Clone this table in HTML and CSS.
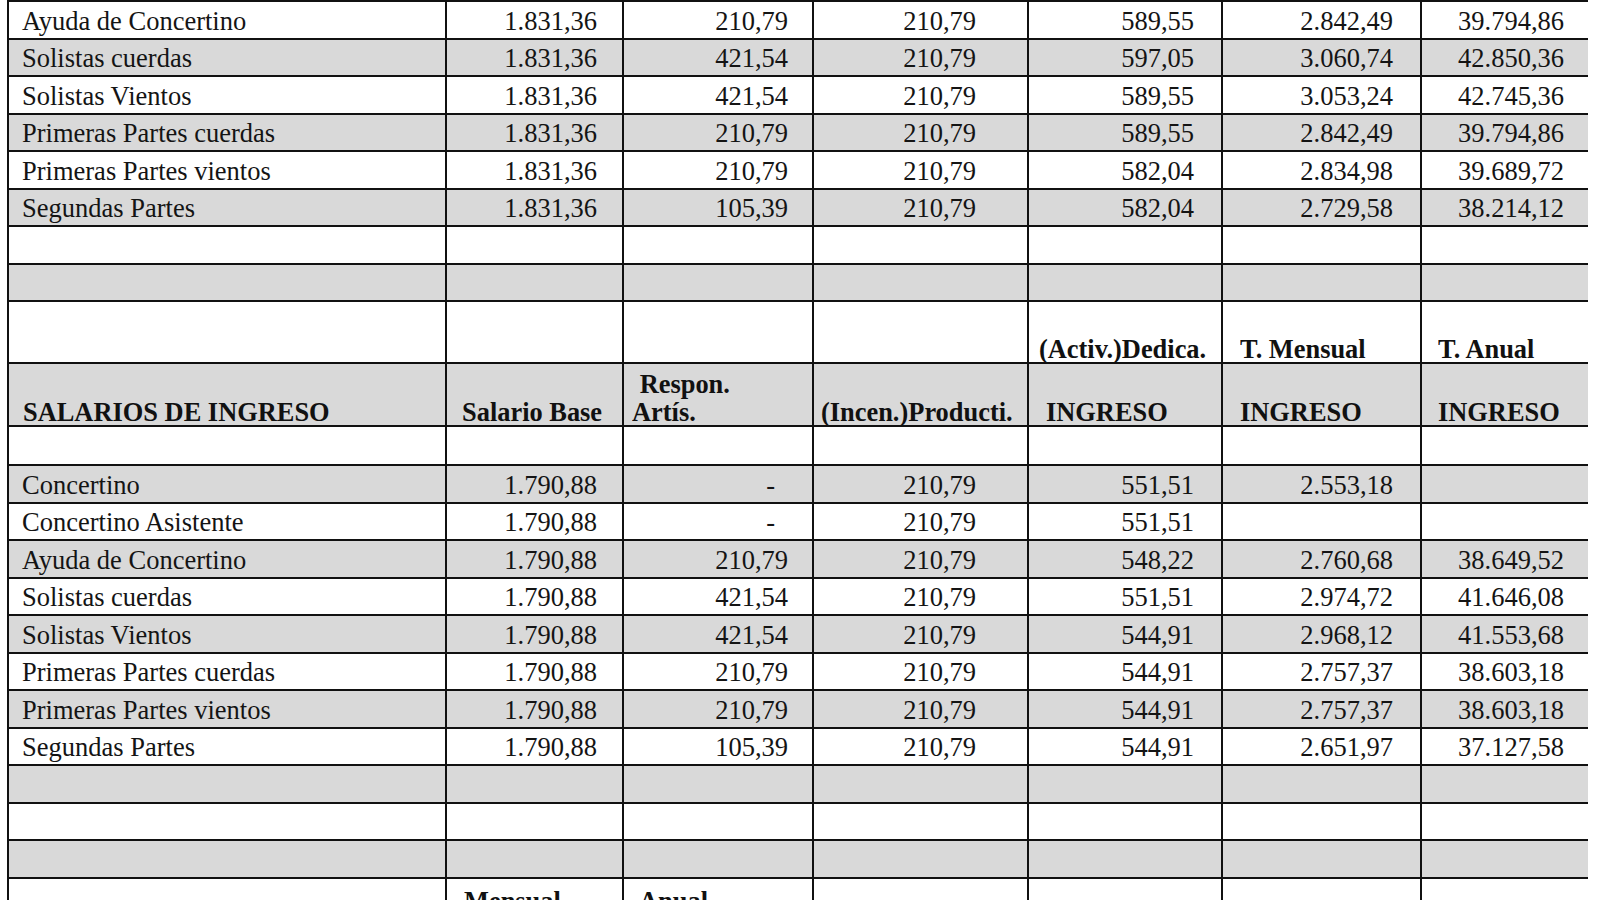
FILE: index.html
```html
<!DOCTYPE html>
<html lang="es">
<head>
<meta charset="utf-8">
<title>Salarios</title>
<link rel="stylesheet" href="styles.css">
</head>
<body>
<div class="sheet">
  <div class="row"><div class="c name">Ayuda de Concertino</div><div class="c n2">1.831,36</div><div class="c n3">210,79</div><div class="c n4">210,79</div><div class="c n5">589,55</div><div class="c n6">2.842,49</div><div class="c n7">39.794,86</div></div>
  <div class="row g"><div class="c name">Solistas cuerdas</div><div class="c n2">1.831,36</div><div class="c n3">421,54</div><div class="c n4">210,79</div><div class="c n5">597,05</div><div class="c n6">3.060,74</div><div class="c n7">42.850,36</div></div>
  <div class="row"><div class="c name">Solistas Vientos</div><div class="c n2">1.831,36</div><div class="c n3">421,54</div><div class="c n4">210,79</div><div class="c n5">589,55</div><div class="c n6">3.053,24</div><div class="c n7">42.745,36</div></div>
  <div class="row g"><div class="c name">Primeras Partes cuerdas</div><div class="c n2">1.831,36</div><div class="c n3">210,79</div><div class="c n4">210,79</div><div class="c n5">589,55</div><div class="c n6">2.842,49</div><div class="c n7">39.794,86</div></div>
  <div class="row"><div class="c name">Primeras Partes vientos</div><div class="c n2">1.831,36</div><div class="c n3">210,79</div><div class="c n4">210,79</div><div class="c n5">582,04</div><div class="c n6">2.834,98</div><div class="c n7">39.689,72</div></div>
  <div class="row g"><div class="c name">Segundas Partes</div><div class="c n2">1.831,36</div><div class="c n3">105,39</div><div class="c n4">210,79</div><div class="c n5">582,04</div><div class="c n6">2.729,58</div><div class="c n7">38.214,12</div></div>
  <div class="row"><div class="c"></div><div class="c"></div><div class="c"></div><div class="c"></div><div class="c"></div><div class="c"></div><div class="c"></div></div>
  <div class="row g"><div class="c"></div><div class="c"></div><div class="c"></div><div class="c"></div><div class="c"></div><div class="c"></div><div class="c"></div></div>

  <div class="row h62 head"><div class="c"></div><div class="c"></div><div class="c"></div><div class="c"></div><div class="c p10"><span class="hd">(Activ.)Dedica.</span></div><div class="c p17"><span class="hd">T. Mensual</span></div><div class="c p16"><span class="hd">T. Anual</span></div></div>
  <div class="row h63 g head"><div class="c p14"><span class="hd">SALARIOS DE INGRESO</span></div><div class="c p15"><span class="hd">Salario Base</span></div><div class="c p8"><span class="hd"><span class="l1">Respon.</span><span class="l2">Artís.</span></span></div><div class="c p7"><span class="hd">(Incen.)Producti.</span></div><div class="c p17"><span class="hd">INGRESO</span></div><div class="c p17"><span class="hd">INGRESO</span></div><div class="c p16"><span class="hd">INGRESO</span></div></div>
  <div class="row h39"><div class="c"></div><div class="c"></div><div class="c"></div><div class="c"></div><div class="c"></div><div class="c"></div><div class="c"></div></div>

  <div class="row g"><div class="c name">Concertino</div><div class="c n2">1.790,88</div><div class="c n3 dash">-</div><div class="c n4">210,79</div><div class="c n5">551,51</div><div class="c n6">2.553,18</div><div class="c n7"></div></div>
  <div class="row"><div class="c name">Concertino Asistente</div><div class="c n2">1.790,88</div><div class="c n3 dash">-</div><div class="c n4">210,79</div><div class="c n5">551,51</div><div class="c n6"></div><div class="c n7"></div></div>
  <div class="row g"><div class="c name">Ayuda de Concertino</div><div class="c n2">1.790,88</div><div class="c n3">210,79</div><div class="c n4">210,79</div><div class="c n5">548,22</div><div class="c n6">2.760,68</div><div class="c n7">38.649,52</div></div>
  <div class="row"><div class="c name">Solistas cuerdas</div><div class="c n2">1.790,88</div><div class="c n3">421,54</div><div class="c n4">210,79</div><div class="c n5">551,51</div><div class="c n6">2.974,72</div><div class="c n7">41.646,08</div></div>
  <div class="row g"><div class="c name">Solistas Vientos</div><div class="c n2">1.790,88</div><div class="c n3">421,54</div><div class="c n4">210,79</div><div class="c n5">544,91</div><div class="c n6">2.968,12</div><div class="c n7">41.553,68</div></div>
  <div class="row"><div class="c name">Primeras Partes cuerdas</div><div class="c n2">1.790,88</div><div class="c n3">210,79</div><div class="c n4">210,79</div><div class="c n5">544,91</div><div class="c n6">2.757,37</div><div class="c n7">38.603,18</div></div>
  <div class="row g"><div class="c name">Primeras Partes vientos</div><div class="c n2">1.790,88</div><div class="c n3">210,79</div><div class="c n4">210,79</div><div class="c n5">544,91</div><div class="c n6">2.757,37</div><div class="c n7">38.603,18</div></div>
  <div class="row"><div class="c name">Segundas Partes</div><div class="c n2">1.790,88</div><div class="c n3">105,39</div><div class="c n4">210,79</div><div class="c n5">544,91</div><div class="c n6">2.651,97</div><div class="c n7">37.127,58</div></div>
  <div class="row g"><div class="c"></div><div class="c"></div><div class="c"></div><div class="c"></div><div class="c"></div><div class="c"></div><div class="c"></div></div>
  <div class="row"><div class="c"></div><div class="c"></div><div class="c"></div><div class="c"></div><div class="c"></div><div class="c"></div><div class="c"></div></div>
  <div class="row g"><div class="c"></div><div class="c"></div><div class="c"></div><div class="c"></div><div class="c"></div><div class="c"></div><div class="c"></div></div>
  <div class="row tall top"><div class="c"></div><div class="c p17"><span class="hd">Mensual</span></div><div class="c p15"><span class="hd">Anual</span></div><div class="c"></div><div class="c"></div><div class="c"></div><div class="c"></div></div>
</div>
</body>
</html>
```

FILE: styles.css
```css
html, body {
  margin: 0;
  padding: 0;
  background: #ffffff;
  overflow: hidden;
}

body {
  width: 1600px;
  height: 900px;
  font-family: "Liberation Serif", "Times New Roman", serif;
  font-size: 26.5px;
  color: #141414;
}

.sheet {
  margin-left: 7px;
  width: 1581px;
}

.row {
  display: grid;
  grid-template-columns: 438px 177px 190px 215px 194px 199px 168px;
  height: 37.5px;
  box-sizing: border-box;
  border-top: 2px solid #111111;
  background: #ffffff;
}

.row.g {
  background: #d9d9d9;
}

.row.h62 { height: 62px; }
.row.h63 { height: 63px; }
.row.h39 { height: 39px; }
.row.tall { height: 60px; }

.c {
  border-left: 2px solid #111111;
  display: flex;
  align-items: center;
  padding-top: 2px;
  line-height: 30px;
  white-space: nowrap;
  min-width: 0;
}

.name {
  padding-left: 13px;
}

.n2, .n3, .n4, .n5, .n6, .n7 {
  justify-content: flex-end;
}

.n2 { padding-right: 25px; }
.n3 { padding-right: 24px; }
.n4 { padding-right: 51px; }
.n5 { padding-right: 27px; }
.n6 { padding-right: 27px; }
.n7 { padding-right: 24px; }
.n3.dash { padding-right: 37px; }

.head .c {
  align-items: flex-end;
  padding-top: 0;
  padding-bottom: 0;
}

.head .hd {
  margin-bottom: -1px;
}

.top .c {
  align-items: flex-start;
  padding-top: 8px;
}

.hd {
  display: inline-block;
  font-weight: bold;
  font-size: 27.5px;
  line-height: 28px;
  transform: scaleX(0.96);
  transform-origin: left bottom;
  color: #111111;
}

.hd .l1 {
  display: block;
  padding-left: 8px;
}

.hd .l2 {
  display: block;
}

.p7 { padding-left: 7px; }
.p8 { padding-left: 8px; }
.p10 { padding-left: 10px; }
.p14 { padding-left: 14px; }
.p15 { padding-left: 15px; }
.p16 { padding-left: 16px; }
.p17 { padding-left: 17px; }
```
